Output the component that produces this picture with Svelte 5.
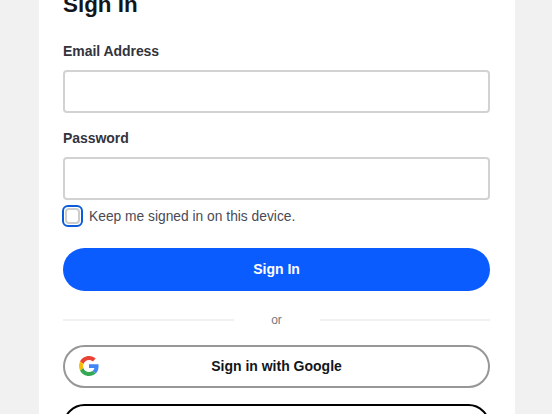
<script>
  let email = '';
  let password = '';
  let keepSignedIn = false;
</script>

<div class="page">
  <main class="card">
    <h1>Sign In</h1>

    <form on:submit|preventDefault>
      <div class="field">
        <label for="email">Email Address</label>
        <input id="email" type="text" bind:value={email} />
      </div>

      <div class="field">
        <label for="password">Password</label>
        <input id="password" type="password" bind:value={password} />
      </div>

      <label class="keep">
        <span class="focus-ring">
          <input type="checkbox" bind:checked={keepSignedIn} />
        </span>
        Keep me signed in on this device.
      </label>

      <button type="submit" class="primary">Sign In</button>
    </form>

    <div class="divider">
      <span class="line"></span>
      <span class="or">or</span>
      <span class="line"></span>
    </div>

    <button type="button" class="social google">
      <svg viewBox="0 0 48 48" width="20" height="20" aria-hidden="true">
        <path fill="#EA4335" d="M24 9.5c3.54 0 6.71 1.22 9.21 3.6l6.85-6.85C35.9 2.38 30.47 0 24 0 14.62 0 6.51 5.38 2.56 13.22l7.98 6.19C12.43 13.72 17.74 9.5 24 9.5z"/>
        <path fill="#4285F4" d="M46.98 24.55c0-1.57-.15-3.09-.38-4.55H24v9.02h12.94c-.58 2.96-2.26 5.48-4.78 7.18l7.73 6c4.51-4.18 7.09-10.36 7.09-17.65z"/>
        <path fill="#FBBC05" d="M10.53 28.59c-.48-1.45-.76-2.99-.76-4.59s.27-3.14.76-4.59l-7.98-6.19C.92 16.46 0 20.12 0 24c0 3.88.92 7.54 2.56 10.78l7.97-6.19z"/>
        <path fill="#34A853" d="M24 48c6.48 0 11.93-2.13 15.89-5.81l-7.73-6c-2.15 1.45-4.92 2.3-8.16 2.3-6.26 0-11.57-4.22-13.47-9.91l-7.98 6.19C6.51 42.62 14.62 48 24 48z"/>
      </svg>
      <span class="social-label">Sign in with Google</span>
    </button>

    <button type="button" class="social next" aria-label="Other sign in option"></button>
  </main>
</div>

<style>
  :global(body) {
    margin: 0;
    background: #f1f1f1;
  }

  .page {
    height: 414px;
    overflow: hidden;
    font-family: "Liberation Sans", Arial, sans-serif;
  }

  .card {
    width: 427px;
    margin-left: 39px;
    padding: 0 25px 0 24px;
    background: #fff;
    min-height: 600px;
  }

  h1 {
    margin: -8px 0 0;
    font-size: 22.4px;
    line-height: 26px;
    font-weight: 700;
    color: #131619;
  }

  form {
    display: flex;
    flex-direction: column;
  }

  .field {
    display: flex;
    flex-direction: column;
    margin-top: 24px;
  }

  .field + .field {
    margin-top: 16px;
  }

  .field label {
    font-size: 14px;
    line-height: 18px;
    font-weight: 700;
    letter-spacing: -0.05px;
    color: #33333d;
    margin-bottom: 10px;
  }

  .field input {
    box-sizing: border-box;
    width: 100%;
    height: 43px;
    border: 2px solid #d2d2d2;
    border-radius: 4px;
    background: #fff;
    outline: none;
  }

  .keep {
    display: flex;
    align-items: center;
    gap: 6px;
    margin-top: 5px;
    height: 22px;
    font-size: 13.8px;
    color: #4a4a55;
  }

  .focus-ring {
    box-sizing: border-box;
    display: flex;
    align-items: center;
    justify-content: center;
    width: 21px;
    height: 22px;
    margin-left: -1px;
    border: 2px solid #0b5cdb;
    border-radius: 6px;
  }

  .focus-ring input {
    appearance: none;
    box-sizing: border-box;
    width: 15px;
    height: 16px;
    margin: 0;
    border: 2px solid #cdcdcd;
    border-radius: 4px;
    background: #fff;
  }

  .primary {
    height: 43px;
    margin-top: 21px;
    padding: 0 0 2px;
    border: none;
    border-radius: 22px;
    background: #0b5cff;
    color: #fff;
    font: 700 14px "Liberation Sans", Arial, sans-serif;
  }

  .divider {
    display: flex;
    align-items: center;
    margin-top: 22px;
    height: 14px;
  }

  .line {
    flex: 1;
    height: 2px;
    background: #f1f1f1;
  }

  .or {
    width: 86px;
    text-align: center;
    font-size: 12px;
    color: #75787d;
  }

  .social {
    position: relative;
    box-sizing: border-box;
    display: flex;
    align-items: center;
    justify-content: center;
    width: 100%;
    height: 43px;
    padding: 0 0 2px;
    background: #fff;
    border-radius: 22px;
    font: 700 14px "Liberation Sans", Arial, sans-serif;
    color: #131619;
  }

  .google {
    margin-top: 18px;
    border: 2px solid #979797;
  }

  .google svg {
    position: absolute;
    left: 14px;
    top: 9px;
  }

  .next {
    margin-top: 16px;
    border: 2px solid #000;
  }
</style>
